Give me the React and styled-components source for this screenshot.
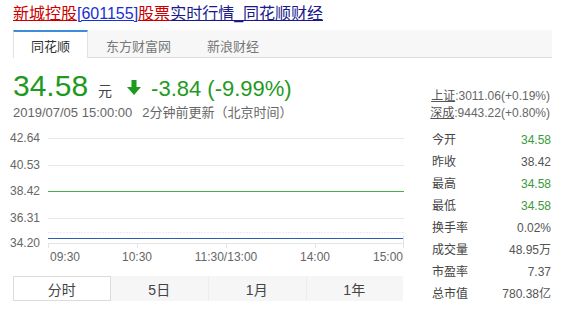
import React from 'react';
import styled, { createGlobalStyle } from 'styled-components';

const GlobalStyle = createGlobalStyle`
  body {
    margin: 0;
    background: #fff;
    font-family: "Liberation Sans", "Noto Sans CJK SC", sans-serif;
  }
`;

const Page = styled.div`
  width: 539px;
  padding: 4px 0 0 13px;
`;

const Title = styled.div`
  font-size: 16px;
  line-height: 20px;
  white-space: nowrap;
`;

const TitleLink = styled.a`
  color: ${(p) => p.$color};
  text-decoration: underline;
`;

const TabBar = styled.div`
  display: flex;
  height: 28px;
  margin-top: 6px;
  background: #f7f7f7;
  border-bottom: 1px solid #dcdcdc;
  box-sizing: border-box;
`;

const Tab = styled.div`
  display: flex;
  align-items: center;
  padding: 0 17px;
  font-size: 13px;
  color: ${(p) => (p.$active ? '#333' : '#777')};
  background: ${(p) => (p.$active ? '#fff' : 'transparent')};
  border-top: 2px solid ${(p) => (p.$active ? '#3d8ed9' : 'transparent')};
  border-left: 1px solid ${(p) => (p.$active ? '#e2e2e2' : 'transparent')};
  border-right: 1px solid ${(p) => (p.$active ? '#e2e2e2' : 'transparent')};
  height: 28px;
  box-sizing: border-box;
  position: relative;
  & + & + &::before {
    content: '';
    position: absolute;
    left: 0;
    top: 6px;
    height: 15px;
    border-left: 1px solid #dddddd;
  }
`;

const QuoteRow = styled.div`
  display: flex;
  justify-content: space-between;
  margin-top: 10px;
`;

const PriceLine = styled.div`
  display: flex;
  align-items: baseline;
  height: 36px;
  line-height: 36px;
  color: #1f9a1f;
  white-space: nowrap;
`;

const Price = styled.span`
  font-size: 30px;
`;

const Unit = styled.span`
  font-size: 14px;
  color: #444;
  margin-left: 10px;
`;

const Arrow = styled.svg`
  width: 14px;
  height: 15px;
  margin-left: 15px;
  align-self: center;
  position: relative;
  top: 1px;
`;

const Change = styled.span`
  font-size: 22px;
  margin-left: 10px;
`;

const DateLine = styled.div`
  font-size: 13px;
  line-height: 18px;
  color: #666;
  white-space: nowrap;
`;

const UpdateNote = styled.span`
  margin-left: 10px;
`;

const IndexBlock = styled.div`
  align-self: flex-end;
  text-align: right;
  font-size: 12px;
  line-height: 17px;
  color: #666;
  padding-right: 2px;
`;

const IndexName = styled.a`
  color: #555;
  text-decoration: underline;
`;

const Body = styled.div`
  display: flex;
`;

const ChartCol = styled.div`
  width: 392px;
`;

const ChartSvg = styled.svg`
  display: block;
  width: 400px;
  height: 138px;
  margin-top: 6px;
  overflow: visible;
  shape-rendering: crispEdges;
`;

const RangeBar = styled.div`
  display: grid;
  grid-template-columns: repeat(4, 1fr);
  width: 390px;
  height: 25px;
  margin-top: 10px;
  background: #f6f6f6;
`;

const RangeBtn = styled.div`
  display: flex;
  align-items: center;
  justify-content: center;
  font-size: 14px;
  color: #444;
  background: ${(p) => (p.$active ? '#fff' : 'transparent')};
  border: 1px solid ${(p) => (p.$active ? '#dcdcdc' : 'transparent')};
  border-left-color: ${(p) => (p.$active ? '#dcdcdc' : '#ececec')};
  box-sizing: border-box;
  &:nth-child(2) {
    border-left-color: transparent;
  }
`;

const Stats = styled.div`
  width: 119px;
  margin-left: 27px;
  margin-top: 7px;
`;

const StatRow = styled.div`
  display: flex;
  justify-content: space-between;
  font-size: 12px;
  line-height: 22px;
  color: #444;
`;

const StatValue = styled.span`
  color: ${(p) => (p.$green ? '#3a9a3a' : '#555')};
`;

const yLabels = ['42.64', '40.53', '38.42', '36.31', '34.20'];
const yPos = [10, 37, 63, 90, 115];
const xTicks = [
  { x: 35, label: '09:30', anchor: 'start', tx: 37 },
  { x: 124, label: '10:30', anchor: 'middle', tx: 124 },
  { x: 213, label: '11:30/13:00', anchor: 'middle', tx: 213 },
  { x: 302, label: '14:00', anchor: 'middle', tx: 302 },
  { x: 390, label: '15:00', anchor: 'end', tx: 390 },
];

const stats = [
  ['今开', '34.58', true],
  ['昨收', '38.42', false],
  ['最高', '34.58', true],
  ['最低', '34.58', true],
  ['换手率', '0.02%', false],
  ['成交量', '48.95万', false],
  ['市盈率', '7.37', false],
  ['总市值', '780.38亿', false],
];

function Chart() {
  return (
    <ChartSvg viewBox="0 0 400 138">
      {yLabels.map((l, i) => (
        <text
          key={l}
          x="27"
          y={yPos[i] + 4}
          textAnchor="end"
          fontSize="12"
          fill="#666"
          fontFamily="Liberation Sans, sans-serif"
        >
          {l}
        </text>
      ))}
      {[0, 1, 3].map((i) => (
        <line key={i} x1="35" x2="391" y1={yPos[i] + 0.5} y2={yPos[i] + 0.5} stroke="#e8e8e8" />
      ))}
      <rect x="35" y="63" width="356" height="1" fill="#46b046" />
      <line x1="35" x2="391" y1="104.5" y2="104.5" stroke="#e6ecf5" strokeDasharray="2 1" />
      <rect x="35" y="110" width="356" height="1" fill="#2c5fb3" />
      <line x1="35" x2="391" y1="115.5" y2="115.5" stroke="#e4e4e4" />
      <line x1="390.5" x2="390.5" y1="108" y2="120" stroke="#e0e0e0" />
      {xTicks.map((t) => (
        <g key={t.label}>
          <line x1={t.x + 0.5} x2={t.x + 0.5} y1="115" y2="120" stroke="#e4e4e4" />
          <text
            x={t.tx}
            y="133"
            textAnchor={t.anchor}
            fontSize="12"
            fill="#666"
            fontFamily="Liberation Sans, sans-serif"
          >
            {t.label}
          </text>
        </g>
      ))}
    </ChartSvg>
  );
}

export default function App() {
  return (
    <>
      <GlobalStyle />
      <Page>
        <Title>
          <TitleLink $color="#cc0000">新城控股</TitleLink>
          <TitleLink $color="#1a2fd0">[601155]</TitleLink>
          <TitleLink $color="#cc0000">股票</TitleLink>
          <TitleLink $color="#1a1a8c">实时行情_同花顺财经</TitleLink>
        </Title>
        <TabBar>
          <Tab $active>同花顺</Tab>
          <Tab>东方财富网</Tab>
          <Tab>新浪财经</Tab>
        </TabBar>
        <QuoteRow>
          <div>
            <PriceLine>
              <Price>34.58</Price>
              <Unit>元</Unit>
              <Arrow viewBox="0 0 14 15">
                <path d="M4.5 0 H9.5 V7 H14 L7 15 L0 7 H4.5 Z" fill="#1f9a1f" />
              </Arrow>
              <Change>-3.84 (-9.99%)</Change>
            </PriceLine>
            <DateLine>
              2019/07/05 15:00:00
              <UpdateNote>2分钟前更新（北京时间）</UpdateNote>
            </DateLine>
          </div>
          <IndexBlock>
            <div>
              <IndexName>上证</IndexName>:3011.06(+0.19%)
            </div>
            <div>
              <IndexName>深成</IndexName>:9443.22(+0.80%)
            </div>
          </IndexBlock>
        </QuoteRow>
        <Body>
          <ChartCol>
            <Chart />
            <RangeBar>
              <RangeBtn $active>分时</RangeBtn>
              <RangeBtn>5日</RangeBtn>
              <RangeBtn>1月</RangeBtn>
              <RangeBtn>1年</RangeBtn>
            </RangeBar>
          </ChartCol>
          <Stats>
            {stats.map(([label, value, green]) => (
              <StatRow key={label}>
                <span>{label}</span>
                <StatValue $green={green}>{value}</StatValue>
              </StatRow>
            ))}
          </Stats>
        </Body>
      </Page>
    </>
  );
}
